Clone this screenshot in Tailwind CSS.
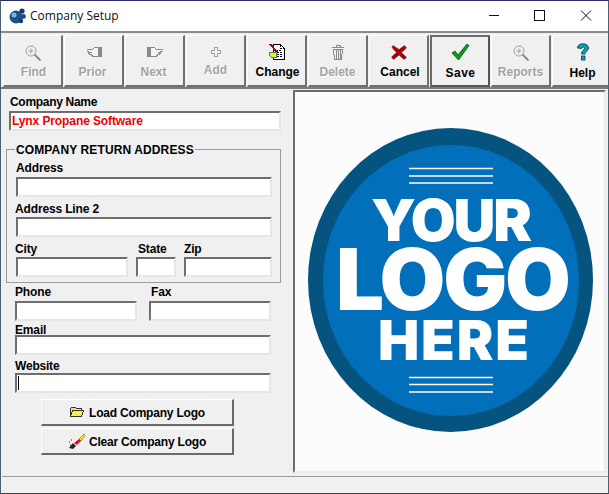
<!DOCTYPE html>
<html lang="en">
<head>
  <meta charset="UTF-8" />
  <title>Company Setup</title>
  <script src="https://cdn.jsdelivr.net/npm/@tailwindcss/browser@4"></script>
</head>
<body class="w-[609px] h-[494px] overflow-hidden bg-[#f0f0f0] font-['Liberation_Sans',sans-serif] text-[12px] font-bold text-black">
<div class="h-[494px] flex flex-col border-x border-x-[#4a5f72] border-t border-t-[#2b2b6b] border-b border-b-[#444]">

  <!-- Title bar -->
  <header class="h-[30px] bg-white flex items-center shrink-0">
    <svg class="ml-[8px] w-[18px] h-[18px]" viewBox="0 0 18 18">
      <circle cx="7" cy="10" r="6.5" fill="#1f4e8c"/>
      <circle cx="5" cy="8" r="2.5" fill="#7fb0e6"/>
      <circle cx="13" cy="4" r="2.6" fill="#123a6b"/>
      <circle cx="14.5" cy="9.5" r="2.4" fill="#1f4e8c"/>
      <circle cx="12" cy="14" r="2.2" fill="#123a6b"/>
    </svg>
    <span class="ml-[3px] font-['Open_Sans',sans-serif] font-normal text-[12px] text-[#111]">Company Setup</span>
    <div class="ml-auto flex items-center">
      <svg class="w-[46px] h-[30px]" viewBox="0 0 46 30"><path d="M18 14.5h10" stroke="#111" fill="none"/></svg>
      <svg class="w-[46px] h-[30px]" viewBox="0 0 46 30"><rect x="17.5" y="9.5" width="10" height="10" stroke="#111" fill="none"/></svg>
      <svg class="w-[46px] h-[30px] mr-[-1px]" viewBox="0 0 46 30"><path d="M18 9.5l10 10M28 9.5l-10 10" stroke="#111" fill="none"/></svg>
    </div>
  </header>

  <!-- Toolbar -->
  <nav class="h-[58px] shrink-0 overflow-hidden border-t-2 border-t-[#8a8a8a] border-b-2 border-b-[#7a7a7a] flex pl-[2px] pt-[2px] pb-[1px] gap-px">
    <button class="w-[60px] h-[52px] shrink-0 flex flex-col items-center border border-white border-r-2 border-r-[#707070] border-b-2 border-b-[#707070] text-[#a3a3a3] [text-shadow:1px_1px_0_#fff]">
      <svg class="mt-[8px] w-[18px] h-[18px]" viewBox="0 0 18 18"><circle cx="7" cy="7" r="5" fill="none" stroke="#a0a0a0"/><path d="M7 4.500v5M4.500 7h5" stroke="#a0a0a0"/><path d="M10.500 10.500l6 6" stroke="#8a8a8a" stroke-width="2"/></svg>
      <span class="mt-[1px] ml-[2px]">Find</span>
    </button>
    <button class="w-[60px] h-[52px] shrink-0 flex flex-col items-center border border-white border-r-2 border-r-[#707070] border-b-2 border-b-[#707070] text-[#a3a3a3] [text-shadow:1px_1px_0_#fff]">
      <svg class="mt-[8px] w-[18px] h-[18px]" viewBox="0 0 18 18" shape-rendering="crispEdges"><path d="M1.500 5.500h6l2-2h4v9h-6l-1-2h-2l-1-2h3M4 7.500H1.500" fill="#f6f6f6" stroke="#8a8a8a"/><rect x="13" y="3" width="4" height="10" fill="#8a8a8a"/></svg>
      <span class="mt-[1px] mr-[2px]">Prior</span>
    </button>
    <button class="w-[60px] h-[52px] shrink-0 flex flex-col items-center border border-white border-r-2 border-r-[#707070] border-b-2 border-b-[#707070] text-[#a3a3a3] [text-shadow:1px_1px_0_#fff]">
      <svg class="mt-[8px] w-[18px] h-[18px]" viewBox="0 0 18 18" shape-rendering="crispEdges"><path d="M16.500 5.500h-6l-2-2h-4v9h6l1-2h2l1-2h-3M14 7.500h2.500" fill="#f6f6f6" stroke="#8a8a8a"/><rect x="1" y="3" width="4" height="10" fill="#8a8a8a"/></svg>
      <span class="mt-[1px] mr-[2px]">Next</span>
    </button>
    <button class="w-[60px] h-[52px] shrink-0 flex flex-col items-center border border-white border-r-2 border-r-[#707070] border-b-2 border-b-[#707070] text-[#a3a3a3] [text-shadow:1px_1px_0_#fff]">
      <svg class="mt-[10px] w-[12px] h-[12px]" viewBox="0 0 12 12" shape-rendering="crispEdges"><path d="M4.500 1.500h3v3h3v3h-3v3h-3v-3h-3v-3h3z" fill="#f4f4f4" stroke="#a0a0a0"/></svg>
      <span class="mt-[3px]">Add</span>
    </button>
    <button class="w-[60px] h-[52px] shrink-0 flex flex-col items-center border border-white border-r-2 border-r-[#707070] border-b-2 border-b-[#707070]">
      <svg class="mt-[7px] w-[18px] h-[18px]" viewBox="0 0 18 18" shape-rendering="crispEdges"><path d="M5.500 1.500h7l4 4v11h-11z" fill="#fff" stroke="#000"/><path d="M12.500 1.500v4h4M8 7h6M9 9h5M9 11h5M9 13h5" stroke="#000" fill="none" stroke-dasharray="2 1"/><path d="M1 9h7v5H3l-2-2z" fill="#f4f000" stroke="#2a8a8a"/><path d="M2 1l7 8" stroke="#b00000" stroke-width="2"/></svg>
      <span class="mt-[2px] ml-[2px]">Change</span>
    </button>
    <button class="w-[60px] h-[52px] shrink-0 flex flex-col items-center border border-white border-r-2 border-r-[#707070] border-b-2 border-b-[#707070] text-[#a3a3a3] [text-shadow:1px_1px_0_#fff]">
      <svg class="mt-[8px] w-[16px] h-[17px]" viewBox="0 0 16 17" shape-rendering="crispEdges"><path d="M2 3.500h12M6 3V1.500h4V3" stroke="#8a8a8a" fill="none"/><path d="M3.500 5.500h9l-1 10h-7z" fill="#eee" stroke="#8a8a8a"/><path d="M6.500 6v9M8.500 6v9M10.500 6v9" stroke="#8a8a8a"/></svg>
      <span class="mt-[2px]">Delete</span>
    </button>
    <button class="w-[60px] h-[52px] shrink-0 flex flex-col items-center border border-white border-r-2 border-r-[#707070] border-b-2 border-b-[#707070]">
      <svg class="mt-[8px] w-[16px] h-[16px]" viewBox="0 0 16 16"><path d="M2 1.500l6 4 5.500-4 2 2.500-5 4.500 5 5-2.500 2-5-4.500-5.500 4.500-2-2.500 5-4.500-4.500-5z" fill="#a80000" stroke="#7a0a0a" stroke-width=".5"/></svg>
      <span class="mt-[3px] ml-[3px]">Cancel</span>
    </button>
    <button class="w-[60px] h-[52px] shrink-0 flex flex-col items-center border-2 border-[#6a6a6a] border-r-[#555] border-b-[#555]">
      <svg class="mt-[6px] w-[19px] h-[18px]" viewBox="0 0 19 18"><path d="M1 10l3-2 3 4L16 1l2 1.500L7.500 17z" fill="#0aa00a" stroke="#064a2a" stroke-width=".8"/></svg>
      <span class="mt-[3px] ml-[1px] tracking-[0.5px]">Save</span>
    </button>
    <button class="w-[60px] h-[52px] shrink-0 flex flex-col items-center border border-white border-r-2 border-r-[#707070] border-b-2 border-b-[#707070] text-[#a3a3a3] [text-shadow:1px_1px_0_#fff]">
      <svg class="mt-[8px] w-[18px] h-[18px]" viewBox="0 0 18 18"><circle cx="7" cy="7" r="5" fill="none" stroke="#a0a0a0"/><path d="M7 4.500v5M4.500 7h5" stroke="#a0a0a0"/><path d="M10.500 10.500l6 6" stroke="#8a8a8a" stroke-width="2"/></svg>
      <span class="mt-[1px]">Reports</span>
    </button>
    <button class="w-[60px] h-[52px] shrink-0 flex flex-col items-center border border-white border-r-0 border-b-2 border-b-[#707070]">
      <svg class="mt-[7px] w-[14px] h-[18px]" viewBox="0 0 14 18"><path d="M1.500 5c0-3 2.500-4.200 5.500-4.200s5.500 1.500 5.500 4.200c0 3-3.500 3.500-3.500 6H5.500c0-3.500 3-4 3-6 0-1.200-3-1.200-3 .5z" fill="#08a0b0" stroke="#063a5a" stroke-width=".8"/><rect x="5.500" y="13" width="3.500" height="4" fill="#08a0b0" stroke="#063a5a" stroke-width=".8"/></svg>
      <span class="mt-[3px]">Help</span>
    </button>
  </nav>

  <!-- Main area -->
  <main class="flex-1 flex min-h-0">
    <section class="w-[292px] shrink-0 pl-[8px] pt-[6px] tracking-[-0.15px]">
      <label class="block h-[15px] leading-[15px] ml-[1px] tracking-[-0.3px]">Company Name</label>
      <div class="mt-[1px] w-[272px] h-[20px] bg-white border-2 border-t-[#6e6e6e] border-l-[#6e6e6e] border-r-[#e6e6e6] border-b-[#e6e6e6] text-[#f00000] leading-[16px] pl-[1px] tracking-[-0.1px]">Lynx Propane Software</div>

      <!-- Return address group -->
      <fieldset class="mt-[11px] ml-[-3px] w-[275px] h-[141px] border border-[#9a9a9a] pl-[9px] pr-[8px]">
        <legend class="ml-[-1px] px-[1px] h-[14px] leading-[17px] tracking-[0.12px]">COMPANY RETURN ADDRESS</legend>
        <label class="block h-[15px] leading-[17px] mt-[4px]">Address</label>
        <div class="mt-[2px] h-[20px] bg-white border-2 border-t-[#6e6e6e] border-l-[#6e6e6e] border-r-[#e6e6e6] border-b-[#e6e6e6]"></div>
        <label class="block h-[15px] leading-[15px] mt-[5px] ml-[-1px]">Address Line 2</label>
        <div class="h-[20px] bg-white border-2 border-t-[#6e6e6e] border-l-[#6e6e6e] border-r-[#e6e6e6] border-b-[#e6e6e6]"></div>
        <div class="mt-[5px] flex gap-[8px]">
          <div class="w-[112px]">
            <label class="block h-[15px] leading-[15px] ml-[-1px]">City</label>
            <div class="h-[20px] bg-white border-2 border-t-[#6e6e6e] border-l-[#6e6e6e] border-r-[#e6e6e6] border-b-[#e6e6e6]"></div>
          </div>
          <div class="w-[40px]">
            <label class="block h-[15px] leading-[15px] ml-[2px]">State</label>
            <div class="h-[20px] bg-white border-2 border-t-[#6e6e6e] border-l-[#6e6e6e] border-r-[#e6e6e6] border-b-[#e6e6e6]"></div>
          </div>
          <div class="w-[88px]">
            <label class="block h-[15px] leading-[15px]">Zip</label>
            <div class="h-[20px] bg-white border-2 border-t-[#6e6e6e] border-l-[#6e6e6e] border-r-[#e6e6e6] border-b-[#e6e6e6]"></div>
          </div>
        </div>
      </fieldset>

      <div class="ml-[6px] w-[256px] mt-[2px]">
        <div class="flex gap-[12px]">
          <div class="w-[122px]">
            <label class="block h-[15px] leading-[15px]">Phone</label>
            <div class="mt-[1px] h-[20px] bg-white border-2 border-t-[#6e6e6e] border-l-[#6e6e6e] border-r-[#e6e6e6] border-b-[#e6e6e6]"></div>
          </div>
          <div class="w-[122px]">
            <label class="block h-[15px] leading-[15px] ml-[2px]">Fax</label>
            <div class="mt-[1px] h-[20px] bg-white border-2 border-t-[#6e6e6e] border-l-[#6e6e6e] border-r-[#e6e6e6] border-b-[#e6e6e6]"></div>
          </div>
        </div>
        <label class="block h-[14px] leading-[19px]">Email</label>
        <div class="h-[20px] bg-white border-2 border-t-[#6e6e6e] border-l-[#6e6e6e] border-r-[#e6e6e6] border-b-[#e6e6e6]"></div>
        <label class="block h-[15px] leading-[17px] mt-[3px] tracking-[-0.2px]">Website</label>
        <div class="h-[20px] bg-white border-2 border-t-[#6e6e6e] border-l-[#6e6e6e] border-r-[#e6e6e6] border-b-[#e6e6e6] flex items-center pl-[1px]"><span class="w-px h-[14px] bg-black"></span></div>
      </div>

      <div class="ml-[32px] w-[193px] mt-[6px] flex flex-col gap-[2px] tracking-[-0.2px]">
        <button class="h-[27px] flex items-center justify-center gap-[5px] border border-white border-r-2 border-r-[#6a6a6a] border-b-2 border-b-[#6a6a6a]">
          <svg class="w-[15px] h-[12px]" viewBox="0 0 15 12" shape-rendering="crispEdges"><path d="M1.500 10.500v-8l1-1h4l1 1h5v2" fill="#f2e27a" stroke="#333"/><path d="M1.500 10.500l2-6h11l-2 6z" fill="#f8ee50" stroke="#333"/></svg>
          <span class="mt-[2px]">Load Company Logo</span>
        </button>
        <button class="h-[27px] flex items-center justify-center gap-[4px] border border-white border-r-2 border-r-[#6a6a6a] border-b-2 border-b-[#6a6a6a]">
          <svg class="w-[17px] h-[17px]" viewBox="0 0 17 17"><path d="M11 6l5-5 1 2-4 5z" fill="#f4e800" stroke="#555" stroke-width=".5"/><path d="M6 10l5-4 2 2-4 4z" fill="#e01020"/><path d="M1 15l4-5 3 3-3 3z" fill="#222"/><path d="M1 9h1M3 7h1M2 12h1" stroke="#222"/></svg>
          <span class="mt-[1px]">Clear Company Logo</span>
        </button>
      </div>
    </section>

    <!-- Logo preview -->
    <div class="w-[313px] h-[383px] mt-[1px] bg-[#fcfcfc] border-2 border-t-[#6e6e6e] border-l-[#6e6e6e] border-r-[#ececec] border-b-[#ececec] flex items-center justify-center">
      <svg class="w-[285px] h-[304px] ml-[2px] mb-[3px]" viewBox="0 0 285 304">
        <ellipse cx="142.500" cy="152" rx="142.500" ry="152" fill="#04547f"/>
        <ellipse cx="143" cy="152.500" rx="128" ry="135.500" fill="#026fba"/>
        <path d="M101 40.500h84M101 48h84M101 55h84M101 249.500h84M101 256.500h84M101 264h84" stroke="#fff" stroke-width="1.600"/>
        <g fill="#fff" font-family="Inter, 'Open Sans', sans-serif" font-weight="900">
          <text x="63" y="113" font-size="58" textLength="161" lengthAdjust="spacing">YOUR</text>
          <text x="28" y="182" font-size="85" textLength="235" lengthAdjust="spacing">LOGO</text>
          <text x="70" y="232" font-size="55" textLength="151" lengthAdjust="spacing">HERE</text>
        </g>
      </svg>
    </div>
  </main>

  <!-- Status bar -->
  <footer class="h-[17px] shrink-0 border-t border-t-[#9a9a9a] ml-px"></footer>
</div>
</body>
</html>
